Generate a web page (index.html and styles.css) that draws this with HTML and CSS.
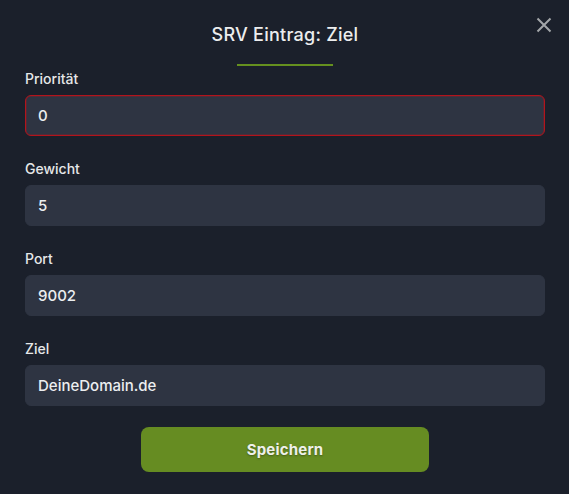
FILE: index.html
```html
<!DOCTYPE html>
<html lang="de">
<head>
<meta charset="utf-8">
<title>SRV Eintrag: Ziel</title>
<link rel="stylesheet" href="styles.css">
</head>
<body>
<div class="modal">
  <button class="close" aria-label="Schließen">
    <svg width="16" height="16" viewBox="0 0 16 16"><path d="M1.5 1.5 L14.5 14.5 M14.5 1.5 L1.5 14.5" stroke="#a3a6a9" stroke-width="2" stroke-linecap="butt" fill="none"/></svg>
  </button>
  <h2 class="title">SRV Eintrag: Ziel</h2>
  <div class="underline"></div>
  <form class="form">
    <div class="field">
      <label class="label">Priorität</label>
      <input class="input input-error" value="0">
    </div>
    <div class="field">
      <label class="label">Gewicht</label>
      <input class="input" value="5">
    </div>
    <div class="field">
      <label class="label">Port</label>
      <input class="input" value="9002">
    </div>
    <div class="field">
      <label class="label">Ziel</label>
      <input class="input" value="DeineDomain.de">
    </div>
    <div class="actions">
      <button type="button" class="save">Speichern</button>
    </div>
  </form>
</div>
</body>
</html>
```
FILE: styles.css
```css
* { box-sizing: border-box; }
html, body { margin: 0; padding: 0; background: #1b202b; }
body { width: 569px; height: 494px; overflow: hidden; font-family: "Inter", "Open Sans", sans-serif; color: #e8e8e8; }
.modal { position: relative; padding: 22px 24px 0 25px; }
.close { position: absolute; top: 17px; right: 17px; width: 16px; height: 16px; padding: 0; border: 0; background: none; cursor: pointer; display: block; }
.close svg { display: block; }
.title { margin: 0; text-align: center; font-family: "Inter", sans-serif; font-weight: 500; font-size: 18px; letter-spacing: 0.25px; line-height: 26px; color: #ecedee; }
.underline { width: 96px; height: 2px; background: #65901f; margin: 16px auto 0; }
.form { display: flex; flex-direction: column; margin-top: 3px; }
.field { display: flex; flex-direction: column; height: 90px; }
.label { font-size: 14px; font-weight: 500; line-height: 20px; color: #e6e7e8; margin-bottom: 6px; }
.input { display: block; height: 41px; width: 520px; border: 1px solid #2e3442; border-radius: 6px; background: #2e3442; color: #eceef0; font-family: "Inter", sans-serif; font-weight: 500; font-size: 15px; padding: 0 12px; outline: none; }
.input-error { border: 1px solid #b3141c; box-shadow: inset 0 0 0 0.5px rgba(179, 20, 28, 0.5); }
.actions { display: flex; justify-content: center; margin-top: -2px; }
.save { width: 288px; height: 45px; border: 0; border-radius: 8px; background: #668c22; color: #eef0ea; font-family: "Inter", sans-serif; font-weight: 700; font-size: 15px; letter-spacing: 0.2px; text-shadow: 0 1px 2px rgba(0,0,0,0.35); cursor: pointer; }
```
